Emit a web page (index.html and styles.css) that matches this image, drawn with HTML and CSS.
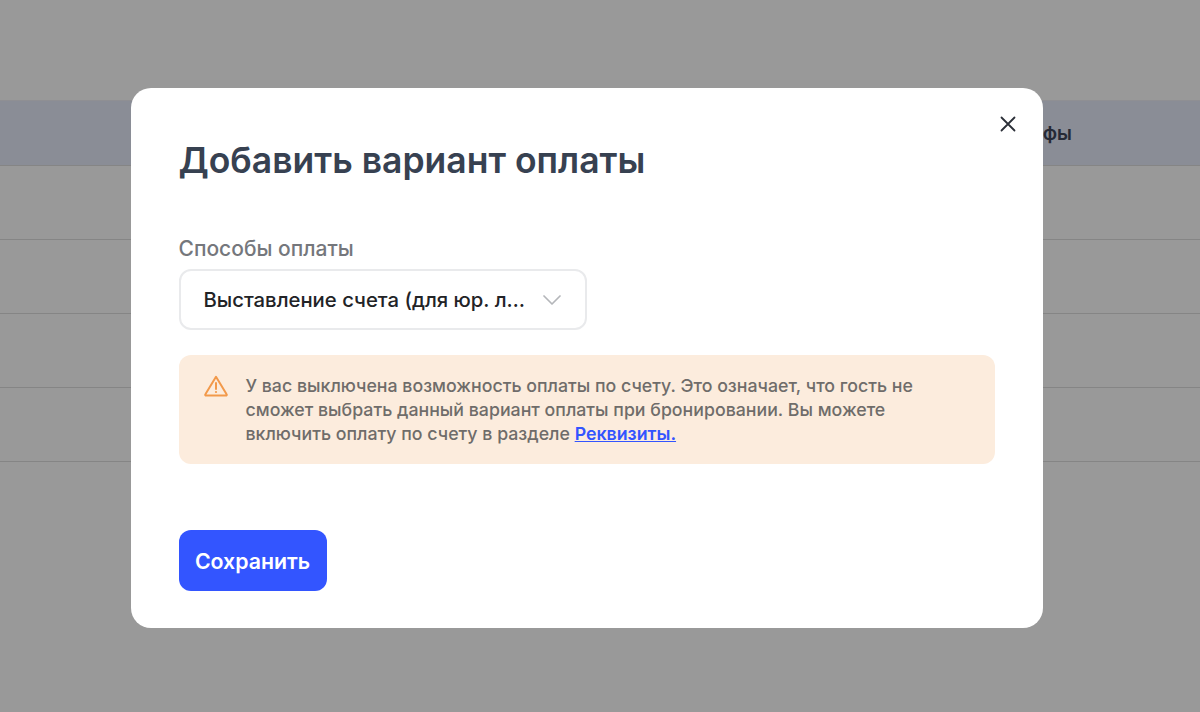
FILE: index.html
```html
<!DOCTYPE html>
<html lang="ru">
<head>
<meta charset="utf-8">
<title>Добавить вариант оплаты</title>
<link rel="stylesheet" href="styles.css">
</head>
<body>
<main class="page">
  <div class="table-head"><span class="head-cell">Тарифы</span></div>
  <div class="table-row"></div>
  <div class="table-row"></div>
  <div class="table-row"></div>
  <div class="table-row"></div>
</main>
<div class="overlay">
  <section class="modal">
    <button class="close" aria-label="Закрыть">
      <svg width="16" height="16" viewBox="0 0 16 16" fill="none"><path d="M1.5 1.5L14.5 14.5M14.5 1.5L1.5 14.5" stroke="#2b2f38" stroke-width="1.8" stroke-linecap="round"/></svg>
    </button>
    <h1 class="title">Добавить вариант оплаты</h1>
    <label class="label">Способы оплаты</label>
    <div class="select">
      <span class="select-value">Выставление счета (для юр. лиц)</span>
      <svg class="chevron" width="18" height="10" viewBox="0 0 18 10" fill="none"><path d="M1 1L9 9L17 1" stroke="#b4b6ba" stroke-width="1.7" stroke-linecap="round" stroke-linejoin="round"/></svg>
    </div>
    <div class="alert">
      <svg class="alert-icon" width="24" height="22" viewBox="0 0 24 22" fill="none"><path d="M12 1.8L22.6 19.2a.9.9 0 0 1-.8 1.4H2.2a.9.9 0 0 1-.8-1.4L12 1.8Z" stroke="#f2994a" stroke-width="2" stroke-linejoin="round"/><path d="M12 8v6" stroke="#f2994a" stroke-width="2" stroke-linecap="round"/><circle cx="12" cy="17" r="1.1" fill="#f2994a"/></svg>
      <p class="alert-text">У вас выключена возможность оплаты по счету. Это означает, что гость не сможет выбрать данный вариант оплаты при бронировании. Вы можете включить оплату по счету в разделе <a class="alert-link" href="#">Реквизиты.</a></p>
    </div>
    <button class="save">Сохранить</button>
  </section>
</div>
</body>
</html>
```
FILE: styles.css
```css
* { box-sizing: border-box; }
html, body { margin: 0; height: 100%; }
body {
  background: #999999;
  font-family: Inter, "Noto Sans", sans-serif;
  overflow: hidden;
}
.page { padding-top: 100px; }
.table-head {
  height: 66px;
  background: #8a8d96;
  border-top: 1px solid #8f8f93;
  border-bottom: 1px solid #858585;
  display: flex;
  align-items: center;
  justify-content: flex-end;
  padding-right: 128px;
}
.head-cell { font-size: 19px; font-weight: 600; color: #262a36; }
.table-row { height: 74px; border-bottom: 1px solid #858585; }
.overlay {
  position: fixed;
  inset: 0;
  display: flex;
  align-items: center;
  justify-content: center;
  padding: 4px 27px 0 0;
}
.modal {
  position: relative;
  width: 912px;
  height: 540px;
  background: #fff;
  border-radius: 20px;
  padding: 48px 48px 37px;
  display: flex;
  flex-direction: column;
  align-items: flex-start;
}
.close {
  position: absolute;
  top: 28px;
  right: 27px;
  padding: 0;
  border: 0;
  background: none;
  display: flex;
}
.title {
  margin: 1px 0 0;
  font-size: 35.5px;
  line-height: 48px;
  font-weight: 600;
  color: #374151;
}
.label {
  margin-top: 52px;
  font-size: 21px;
  line-height: 24px;
  font-weight: 500;
  color: #75777c;
}
.select {
  margin-top: 8px;
  width: 408px;
  height: 61px;
  border: 2px solid #e9eaec;
  border-radius: 12px;
  padding: 0 24px 0 23px;
  display: flex;
  align-items: center;
  gap: 12px;
}
.select-value {
  flex: 1;
  min-width: 0;
  white-space: nowrap;
  overflow: hidden;
  text-overflow: ellipsis;
  font-size: 20.3px;
  font-weight: 500;
  color: #222326;
}
.chevron { flex: none; }
.alert {
  margin-top: 25px;
  width: 816px;
  height: 109px;
  background: #fcecdd;
  border-radius: 12px;
  padding: 16px 24px 16px 25px;
  display: flex;
  gap: 18px;
}
.alert-icon { flex: none; margin-top: 4px; }
.alert-text {
  margin: 3px 0 0;
  font-size: 17.75px;
  line-height: 24px;
  font-weight: 500;
  color: #6f6c6a;
}
.alert-link { color: #3355ff; font-weight: 600; }
.save {
  margin-top: auto;
  width: 148px;
  height: 61px;
  border: 0;
  border-radius: 12px;
  background: #3355ff;
  color: #fff;
  font-family: inherit;
  font-size: 21.3px;
  font-weight: 600;
  padding: 0;
}
```
